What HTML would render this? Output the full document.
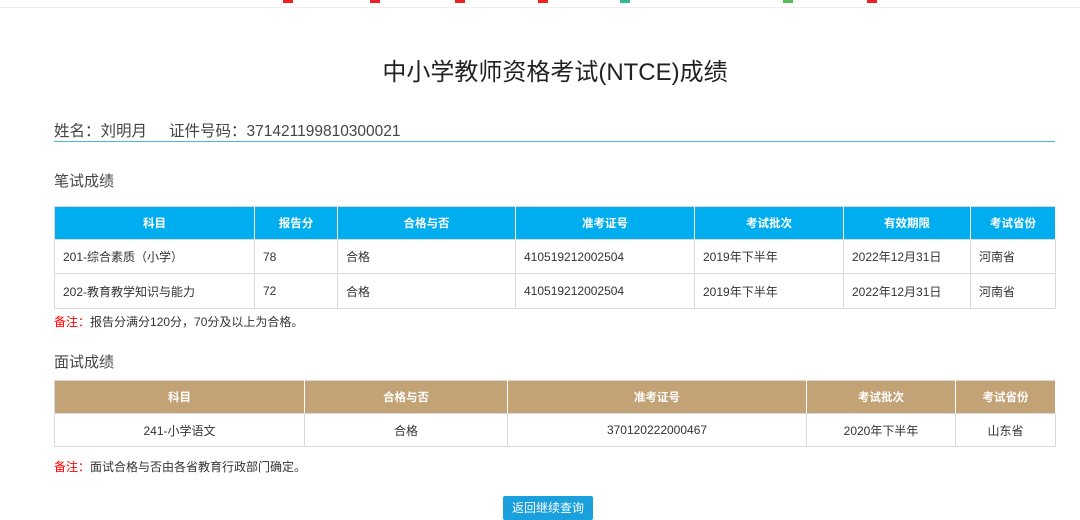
<!DOCTYPE html>
<html><head><meta charset="utf-8"><style>
body{margin:0;width:1080px;height:518px;overflow:hidden;background:#fff;font-family:"Liberation Sans","Noto Sans CJK SC",sans-serif;color:#333;position:relative}
.a{position:absolute}
table{border-collapse:collapse;position:absolute;left:54px;width:1001px;font-size:12px;table-layout:fixed}
td,th{border:1px solid #d9d9d9;padding:0 8px;height:33px;box-sizing:border-box;vertical-align:middle}
th{color:#fff;font-weight:bold;font-size:11.5px;text-align:center}
#t1 th{background:#00aeef;border-right:1px solid #fff}
#t2 th{background:#c3a275;border-right:1px solid #fff}
#t2 td{text-align:center}
.red{color:#f00}
</style></head><body>
<div class="a" style="left:0;top:7px;width:1080px;height:1px;background:#eee"></div>
<div class="a" style="left:283px;top:0;width:10px;height:3px;background:#e22"></div>
<div class="a" style="left:370px;top:0;width:10px;height:3px;background:#e22"></div>
<div class="a" style="left:455px;top:0;width:10px;height:3px;background:#e22"></div>
<div class="a" style="left:538px;top:0;width:10px;height:3px;background:#e22"></div>
<div class="a" style="left:620px;top:0;width:10px;height:3px;background:#3b8"></div>
<div class="a" style="left:783px;top:0;width:10px;height:3px;background:#5b5"></div>
<div class="a" style="left:867px;top:0;width:10px;height:3px;background:#e22"></div>
<div class="a" style="left:0;top:52px;width:1110px;text-align:center;font-size:24px;color:#222">中小学教师资格考试(NTCE)成绩</div>
<div class="a" style="left:54px;top:119px;font-size:15.5px;color:#444">姓名：刘明月<span style="display:inline-block;width:22px"></span>证件号码：371421199810300021</div>
<div class="a" style="left:54px;top:141px;width:1001px;height:1px;background:#4fb3d9"></div>
<div class="a" style="left:54px;top:170px;font-size:15px;color:#444">笔试成绩</div>
<table id="t1" style="top:206px">
<colgroup><col style="width:200px"><col style="width:83px"><col style="width:178px"><col style="width:179px"><col style="width:149px"><col style="width:127px"><col style="width:85px"></colgroup>
<tr><th>科目</th><th>报告分</th><th>合格与否</th><th>准考证号</th><th>考试批次</th><th>有效期限</th><th>考试省份</th></tr>
<tr style="height:34px"><td>201-综合素质（小学）</td><td>78</td><td>合格</td><td>410519212002504</td><td>2019年下半年</td><td>2022年12月31日</td><td>河南省</td></tr>
<tr style="height:35px"><td>202-教育教学知识与能力</td><td>72</td><td>合格</td><td>410519212002504</td><td>2019年下半年</td><td>2022年12月31日</td><td>河南省</td></tr>
</table>
<div class="a" style="left:54px;top:313px;font-size:12px"><span class="red">备注：</span>报告分满分120分，70分及以上为合格。</div>
<div class="a" style="left:54px;top:351px;font-size:15px;color:#444">面试成绩</div>
<table id="t2" style="top:380px">
<colgroup><col style="width:250px"><col style="width:203px"><col style="width:299px"><col style="width:149px"><col style="width:100px"></colgroup>
<tr><th style="height:32px">科目</th><th>合格与否</th><th>准考证号</th><th>考试批次</th><th>考试省份</th></tr>
<tr><td>241-小学语文</td><td>合格</td><td>370120222000467</td><td>2020年下半年</td><td>山东省</td></tr>
</table>
<div class="a" style="left:54px;top:458px;font-size:12px"><span class="red">备注：</span>面试合格与否由各省教育行政部门确定。</div>
<div class="a" style="left:503px;top:496px;width:90px;height:24px;background:#1aa0dc;border-radius:2px;color:#fff;font-size:12px;text-align:center;line-height:24px">返回继续查询</div>
</body></html>
